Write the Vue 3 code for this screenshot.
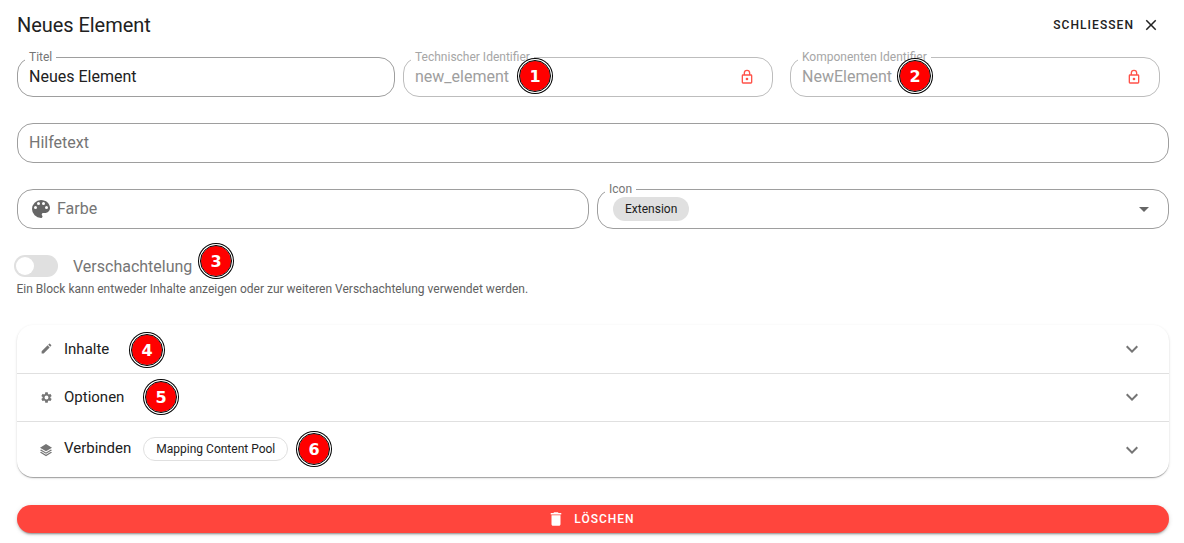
<script setup>
const rows = [
  { label: 'Inhalte', icon: 'M3 17.25V21h3.75L17.81 9.94l-3.75-3.75L3 17.25zM20.71 7.04a1 1 0 0 0 0-1.41l-2.34-2.34a1 1 0 0 0-1.41 0l-1.83 1.83 3.75 3.75 1.83-1.83z', size: 13 },
  { label: 'Optionen', icon: 'M19.14 12.94c.04-.3.06-.61.06-.94s-.02-.64-.07-.94l2.03-1.58a.49.49 0 0 0 .12-.61l-1.92-3.32a.49.49 0 0 0-.59-.22l-2.39.96c-.5-.38-1.03-.7-1.62-.94l-.36-2.54a.48.48 0 0 0-.48-.41h-3.84a.48.48 0 0 0-.47.41l-.36 2.54c-.59.24-1.13.57-1.62.94l-2.39-.96a.48.48 0 0 0-.59.22L2.74 8.87a.48.48 0 0 0 .12.61l2.03 1.58c-.05.3-.09.63-.09.94s.02.64.07.94l-2.03 1.58a.49.49 0 0 0-.12.61l1.92 3.32c.12.22.37.29.59.22l2.39-.96c.5.38 1.03.7 1.62.94l.36 2.54c.05.24.24.41.48.41h3.84c.24 0 .44-.17.47-.41l.36-2.54c.59-.24 1.13-.56 1.62-.94l2.39.96c.22.08.47 0 .59-.22l1.92-3.32a.47.47 0 0 0-.12-.61l-2.01-1.58zM12 15.6A3.6 3.6 0 1 1 12 8.4a3.6 3.6 0 0 1 0 7.2z', size: 13 },
  { label: 'Verbinden', chip: 'Mapping Content Pool', icon: 'M12 3l9 5.5-9 5.5-9-5.5zM12 15.8l-7.4-4.5L3 12.3l9 5.5 9-5.5-1.6-1zM12 19.3l-7.4-4.5L3 15.8l9 5.5 9-5.5-1.6-1z', size: 16 },
]
const badges = [
  { n: 1, x: 535, y: 76 }, { n: 2, x: 915, y: 76 }, { n: 3, x: 216, y: 261 },
  { n: 4, x: 147, y: 350 }, { n: 5, x: 161, y: 397 }, { n: 6, x: 314, y: 449 },
]
const lock = 'M18 8h-1V6a5 5 0 0 0-10 0v2H6a2 2 0 0 0-2 2v10a2 2 0 0 0 2 2h12a2 2 0 0 0 2-2V10a2 2 0 0 0-2-2zM9 6a3 3 0 0 1 6 0v2H9V6zm9 14H6V10h12v10zm-6-3a2 2 0 1 0 0-4 2 2 0 0 0 0 4z'
</script>

<template>
  <div class="page">
    <header class="head">
      <h1 class="title">Neues Element</h1>
      <div class="close">
        <span>SCHLIESSEN</span>
        <svg width="18" height="18" viewBox="0 0 24 24"><path fill="#212121" d="M19 6.41 17.59 5 12 10.59 6.41 5 5 6.41 10.59 12 5 17.59 6.41 19 12 13.41 17.59 19 19 17.59 13.41 12z"/></svg>
      </div>
    </header>

    <div class="row first">
      <div class="field w1"><label>Titel</label><span class="value">Neues Element</span></div>
      <div class="field w2 locked"><label>Technischer Identifier</label><span class="value">new_element</span>
        <svg class="lock" width="16" height="16" viewBox="0 0 24 24"><path fill="#ff5249" :d="lock"/></svg>
      </div>
      <div class="field w2 locked third"><label>Komponenten Identifier</label><span class="value">NewElement</span>
        <svg class="lock" width="16" height="16" viewBox="0 0 24 24"><path fill="#ff5249" :d="lock"/></svg>
      </div>
    </div>

    <div class="row second">
      <div class="field grow"><span class="placeholder">Hilfetext</span></div>
    </div>

    <div class="row third-row">
      <div class="field half">
        <svg class="palette" width="24" height="24" viewBox="0 0 24 24"><path fill="#666" d="M12 3a9 9 0 0 0 0 18c.83 0 1.5-.67 1.5-1.5 0-.39-.15-.74-.39-1.01-.23-.26-.38-.61-.38-.99 0-.83.67-1.5 1.5-1.5H16c2.76 0 5-2.24 5-5 0-4.42-4.03-8-9-8zm-5.5 9a1.5 1.5 0 1 1 0-3 1.5 1.5 0 0 1 0 3zm3-4a1.5 1.5 0 1 1 0-3 1.5 1.5 0 0 1 0 3zm5 0a1.5 1.5 0 1 1 0-3 1.5 1.5 0 0 1 0 3zm3 4a1.5 1.5 0 1 1 0-3 1.5 1.5 0 0 1 0 3z"/></svg>
        <span class="placeholder">Farbe</span>
      </div>
      <div class="field half select">
        <label>Icon</label>
        <span class="tag">Extension</span>
        <svg class="caret" width="24" height="24" viewBox="0 0 24 24"><path fill="#666" d="M7 10l5 5 5-5z"/></svg>
      </div>
    </div>

    <div class="switch-row">
      <span class="track"><span class="thumb"></span></span>
      <span class="switch-label">Verschachtelung</span>
    </div>
    <p class="hint">Ein Block kann entweder Inhalte anzeigen oder zur weiteren Verschachtelung verwendet werden.</p>

    <section class="panels">
      <div v-for="r in rows" :key="r.label" class="panel" :class="{ tall: r.chip }">
        <span class="picon">
          <svg :width="r.size" :height="r.size" viewBox="0 0 24 24"><path fill="#757575" :d="r.icon"/></svg>
        </span>
        <span class="plabel">{{ r.label }}</span>
        <span v-if="r.chip" class="chip">{{ r.chip }}</span>
        <svg class="chev" width="24" height="24" viewBox="0 0 24 24"><path fill="#757575" d="M7.41 8.59 12 13.17l4.59-4.58L18 10l-6 6-6-6z"/></svg>
      </div>
    </section>

    <button class="delete">
      <svg width="18" height="18" viewBox="0 0 24 24"><path fill="#fff" d="M6 19c0 1.1.9 2 2 2h8c1.1 0 2-.9 2-2V7H6v12zM19 4h-3.5l-1-1h-5l-1 1H5v2h14V4z"/></svg>
      <span>LÖSCHEN</span>
    </button>

    <span v-for="b in badges" :key="b.n" class="badge" :style="{ left: b.x - 17 + 'px', top: b.y - 17 + 'px' }">{{ b.n }}</span>
  </div>
</template>

<style>
html, body { margin: 0; background: #fff; }
</style>

<style scoped>
.page {
  position: relative;
  width: 1184px;
  height: 543px;
  overflow: hidden;
  box-sizing: border-box;
  padding: 0 15px 0 17px;
  font-family: Roboto, "Liberation Sans", sans-serif;
  color: #212121;
  background: #fff;
}
.head { display: flex; align-items: center; justify-content: space-between; height: 50px; }
.title { margin: 0; font-size: 20px; font-weight: 400; line-height: 50px; color: #212121; letter-spacing: -0.05px; }
.close { display: flex; align-items: center; gap: 8px; font-size: 12px; font-weight: 500; letter-spacing: 1.07px; margin-right: 9px; }
.row { display: flex; }
.first { margin-top: 7px; gap: 8px; }
.second { margin-top: 26px; }
.third-row { margin-top: 26px; gap: 8px; }
.field {
  position: relative;
  box-sizing: border-box;
  height: 40px;
  display: flex;
  align-items: center;
  padding: 0 11px;
  border: 1px solid #9e9e9e;
  border-radius: 16px;
  font-size: 16px;
  background: #fff;
}
.value, .placeholder { margin-bottom: 2px; }
.w1 { width: 378px; }
.w2 { width: 370px; }
.third { margin-left: 9px; }
.grow { flex: 1; }
.half { flex: 1; }
.locked { border-color: #bdbdbd; }
.locked .value { color: #9e9e9e; }
.field label {
  position: absolute;
  left: 7px;
  top: -7px;
  padding: 0 4px;
  font-size: 12px;
  line-height: 13px;
  color: #757575;
  background: #fff;
}
.locked label { color: #a6a6a6; }
.placeholder { color: #757575; }
.lock { margin-left: auto; margin-right: 6px; }
.palette { margin-right: 4px; }
.tag {
  height: 24px;
  line-height: 24px;
  padding: 0 12px;
  border-radius: 12px;
  margin-left: 4px;
  background: #e0e0e0;
  font-size: 12px;
  color: #212121;
}
.caret { margin-left: auto; margin-right: 1px; }
.switch-row { display: flex; align-items: center; margin-top: 26px; margin-left: -3px; height: 22px; }
.track { position: relative; display: block; width: 44px; height: 22px; border-radius: 11px; background: #e0e0e0; }
.thumb { position: absolute; left: 2px; top: 2px; width: 18px; height: 18px; border-radius: 50%; background: #fff; }
.switch-label { margin-left: 15px; font-size: 16px; color: #757575; }
.hint { margin: 4px 0 0 -0.5px; font-size: 12px; line-height: 16px; color: #616161; }
.panels {
  margin-top: 28px;
  border-radius: 16px;
  background: #fff;
  box-shadow: 0 2px 1px -1px rgba(0,0,0,.2), 0 1px 1px rgba(0,0,0,.14), 0 1px 3px rgba(0,0,0,.12);
}
.panel { display: flex; align-items: center; height: 47.5px; padding: 0 25px 0 23px; border-bottom: 1px solid #e0e0e0; }
.panel:last-child { border-bottom: 0; }
.panel.tall { height: 55px; }
.picon { display: flex; justify-content: center; width: 12px; min-width: 0; flex: 0 0 12px; margin-right: 12px; }
.picon svg { flex-shrink: 0; }
.plabel { font-size: 15px; }
.tall .plabel { margin-bottom: 3px; }
.chip {
  margin-left: 12px;
  margin-bottom: 2px;
  height: 22px;
  line-height: 22px;
  padding: 0 12px;
  border: 1px solid #e0e0e0;
  border-radius: 12px;
  font-size: 12px;
}
.chev { margin-left: auto; }
.delete {
  display: flex;
  align-items: center;
  justify-content: center;
  gap: 9px;
  width: 100%;
  height: 28px;
  margin-top: 28px;
  padding: 0 4px 0 0;
  border: 0;
  border-radius: 14px;
  background: #ff453d;
  color: #fff;
  font-family: inherit;
  font-size: 12px;
  font-weight: 500;
  letter-spacing: 1px;
  box-shadow: 0 3px 1px -2px rgba(0,0,0,.2), 0 2px 2px rgba(0,0,0,.14), 0 1px 5px rgba(0,0,0,.12);
}
.badge {
  position: absolute;
  box-sizing: border-box;
  width: 34px;
  height: 34px;
  display: flex;
  align-items: center;
  justify-content: center;
  border-radius: 50%;
  background: #f00;
  border: 2px solid #fff;
  box-shadow: 0 0 0 1px #000;
  outline: 1px solid #000;
  outline-offset: -2px;
  color: #fff;
  font-family: "DejaVu Sans", sans-serif;
  font-size: 16px;
  font-weight: 700;
}
</style>
